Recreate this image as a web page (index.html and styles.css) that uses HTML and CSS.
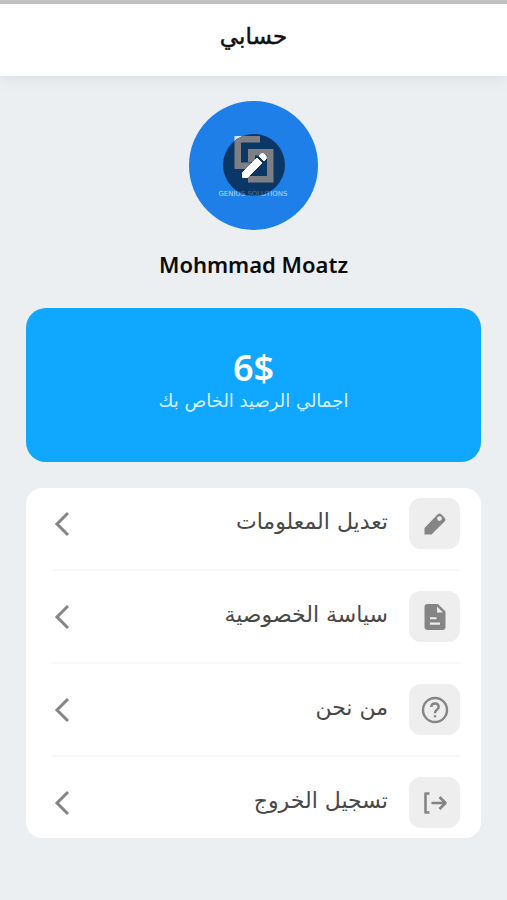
FILE: index.html
```html
<!DOCTYPE html>
<html lang="ar" dir="rtl">
<head>
<meta charset="utf-8">
<meta name="viewport" content="width=device-width, initial-scale=1">
<title>حسابي</title>
<link rel="stylesheet" href="styles.css">
</head>
<body>
<header class="topbar"><h1 class="topbar-title">حسابي</h1></header>
<main class="page">
  <section class="profile">
    <button class="avatar" type="button" aria-label="تعديل الصورة">
      <svg viewBox="0 0 129 129" aria-hidden="true">
        <defs>
          <clipPath id="badge"><circle cx="65" cy="64" r="31"/></clipPath>
          <path id="mark" d="M45.500 35H71V41.500H52V61.500H62V68H45.500ZM59 48H84.500V81.500H59V75H78V54.500H66V61H59Z"/>
        </defs>
        <circle cx="64.500" cy="64.500" r="64.500" fill="#1e7fe8"/>
        <use href="#mark" fill="#d9e2ea"/>
        <text class="logo-text" x="64" y="95" text-anchor="middle" direction="ltr">GENIUS SOLUTIONS</text>
        <circle cx="65" cy="64" r="31" fill="#0b3766"/>
        <g clip-path="url(#badge)">
          <use href="#mark" fill="#7d7f84"/>
          <text class="logo-text logo-text-dim" x="64" y="95" text-anchor="middle" direction="ltr">GENIUS SOLUTIONS</text>
        </g>
        <path d="M53.500 71.500L68 57L73 62L58.500 76.500H53.500Z" fill="#fff" stroke="#fff" stroke-width="1" stroke-linejoin="round"/>
        <path d="M70 55L72 53Q73.500 52 75 53L77 55Q78 56.500 77 58L75 60Z" fill="#fff" stroke="#fff" stroke-width="1" stroke-linejoin="round"/>
      </svg>
    </button>
    <h2 class="name" dir="ltr">Mohmmad Moatz</h2>
  </section>
  <section class="balance">
    <strong class="amount" dir="ltr">6$</strong>
    <span class="caption">اجمالي الرصيد الخاص بك</span>
  </section>
  <nav class="menu">
    <a class="item" href="#edit">
      <span class="tile"><svg viewBox="0 0 28 28"><path fill-rule="evenodd" d="M3.500 18L16.500 4.500Q18.500 2.700 20.500 4.500L23.500 7.500Q25.300 9.500 23.500 11.500L10.500 24.500H3.500ZM18.500 6.300A2.300 2.300 0 1 0 18.500 10.900A2.300 2.300 0 1 0 18.500 6.300Z" fill="#858585"/></svg></span>
      <span class="label">تعديل المعلومات</span>
      <svg class="chevron" viewBox="0 0 16 26"><path d="M14 2L3 13L14 24"/></svg>
    </a>
    <a class="item" href="#privacy">
      <span class="tile"><svg viewBox="0 0 28 28"><path fill-rule="evenodd" d="M6.500 1H17L24.500 8.500V24Q24.500 27 21.500 27H6.500Q3.500 27 3.500 24V4Q3.500 1 6.500 1ZM16 3.500V9.500H22ZM9 14.200V16.200H15.500V14.200ZM9 19.500V21.700H19V19.500Z" fill="#858585"/></svg></span>
      <span class="label">سياسة الخصوصية</span>
      <svg class="chevron" viewBox="0 0 16 26"><path d="M14 2L3 13L14 24"/></svg>
    </a>
    <a class="item" href="#about">
      <span class="tile"><svg viewBox="0 0 28 28" fill="none" stroke="#858585" stroke-width="2.400"><circle cx="14" cy="14" r="12"/><path d="M10.300 11Q10.300 7.500 14 7.500T17.700 11C17.700 13.700 14 13.500 14 17.300"/><path d="M14 19.200V21.400"/></svg></span>
      <span class="label">من نحن</span>
      <svg class="chevron" viewBox="0 0 16 26"><path d="M14 2L3 13L14 24"/></svg>
    </a>
    <a class="item" href="#logout">
      <span class="tile"><svg viewBox="0 0 28 28" fill="none" stroke="#858585" stroke-width="2.600" stroke-linejoin="round"><path d="M8.500 4.500H4.500V23.500H8.500"/><path d="M10.500 14H24.500M18.500 8L24.500 14L18.500 20"/></svg></span>
      <span class="label">تسجيل الخروج</span>
      <svg class="chevron" viewBox="0 0 16 26"><path d="M14 2L3 13L14 24"/></svg>
    </a>
  </nav>
</main>
</body>
</html>
```
FILE: styles.css
```css
* { box-sizing: border-box; }

body {
  margin: 0;
  min-height: 100vh;
  background: #ebeff2;
  color: #111;
  font-family: "DejaVu Sans", "Noto Sans", sans-serif;
}

.topbar {
  border-top: 4px solid #bfbfbf;
  padding: 18px 26px 26px;
  background: #fff;
  box-shadow: 0 4px 16px rgba(0, 0, 0, 0.06);
  text-align: center;
}

.topbar-title {
  margin: 0;
  font-size: 23px;
  font-weight: 400;
  line-height: 28px;
  -webkit-text-stroke: 0.5px #111;
}

.page { padding: 25px 26px; }

.profile {
  display: flex;
  flex-direction: column;
  align-items: center;
  gap: 18px;
}

.avatar {
  width: 129px;
  height: 129px;
  padding: 0;
  border: 0;
  border-radius: 50%;
  background: none;
  cursor: pointer;
}

.avatar svg { display: block; }

.logo-text {
  fill: #b9d8ea;
  font-family: "DejaVu Sans", sans-serif;
  font-size: 7px;
  font-weight: 400;
}

.logo-text-dim { fill: #52708f; }

.name {
  margin: 0;
  color: #0b0b0b;
  font-family: "Noto Sans", sans-serif;
  font-size: 22px;
  font-weight: 600;
  line-height: 32px;
}

.balance {
  display: flex;
  flex-direction: column;
  align-items: center;
  margin-top: 28px;
  padding: 40px 20px 48px;
  border-radius: 20px;
  background: #0fa7ff;
  color: #fff;
}

.amount {
  font-family: "Noto Sans", sans-serif;
  font-size: 36px;
  font-weight: 600;
  line-height: 40px;
}

.caption {
  color: #d5f0ff;
  font-size: 18px;
  line-height: 26px;
}

.menu {
  display: flex;
  flex-direction: column;
  margin-top: 26px;
  padding: 10px 21px 10px 26px;
  border-radius: 16px;
  background: #fff;
}

.item {
  display: flex;
  align-items: center;
  gap: 21px;
  color: #484848;
  text-decoration: none;
}

.item + .item {
  margin-top: 20px;
  padding-top: 20px;
  border-top: 2px solid #f8f8f8;
}

.tile {
  display: grid;
  place-items: center;
  width: 51px;
  height: 51px;
  border-radius: 12px;
  background: #eee;
}

.tile svg {
  width: 28px;
  height: 28px;
}

.label {
  flex: 1;
  padding-bottom: 4px;
  font-size: 22px;
  line-height: 28px;
}

.chevron {
  width: 16px;
  height: 26px;
  margin-left: 2px;
  fill: none;
  stroke: #858585;
  stroke-width: 3;
}
```
